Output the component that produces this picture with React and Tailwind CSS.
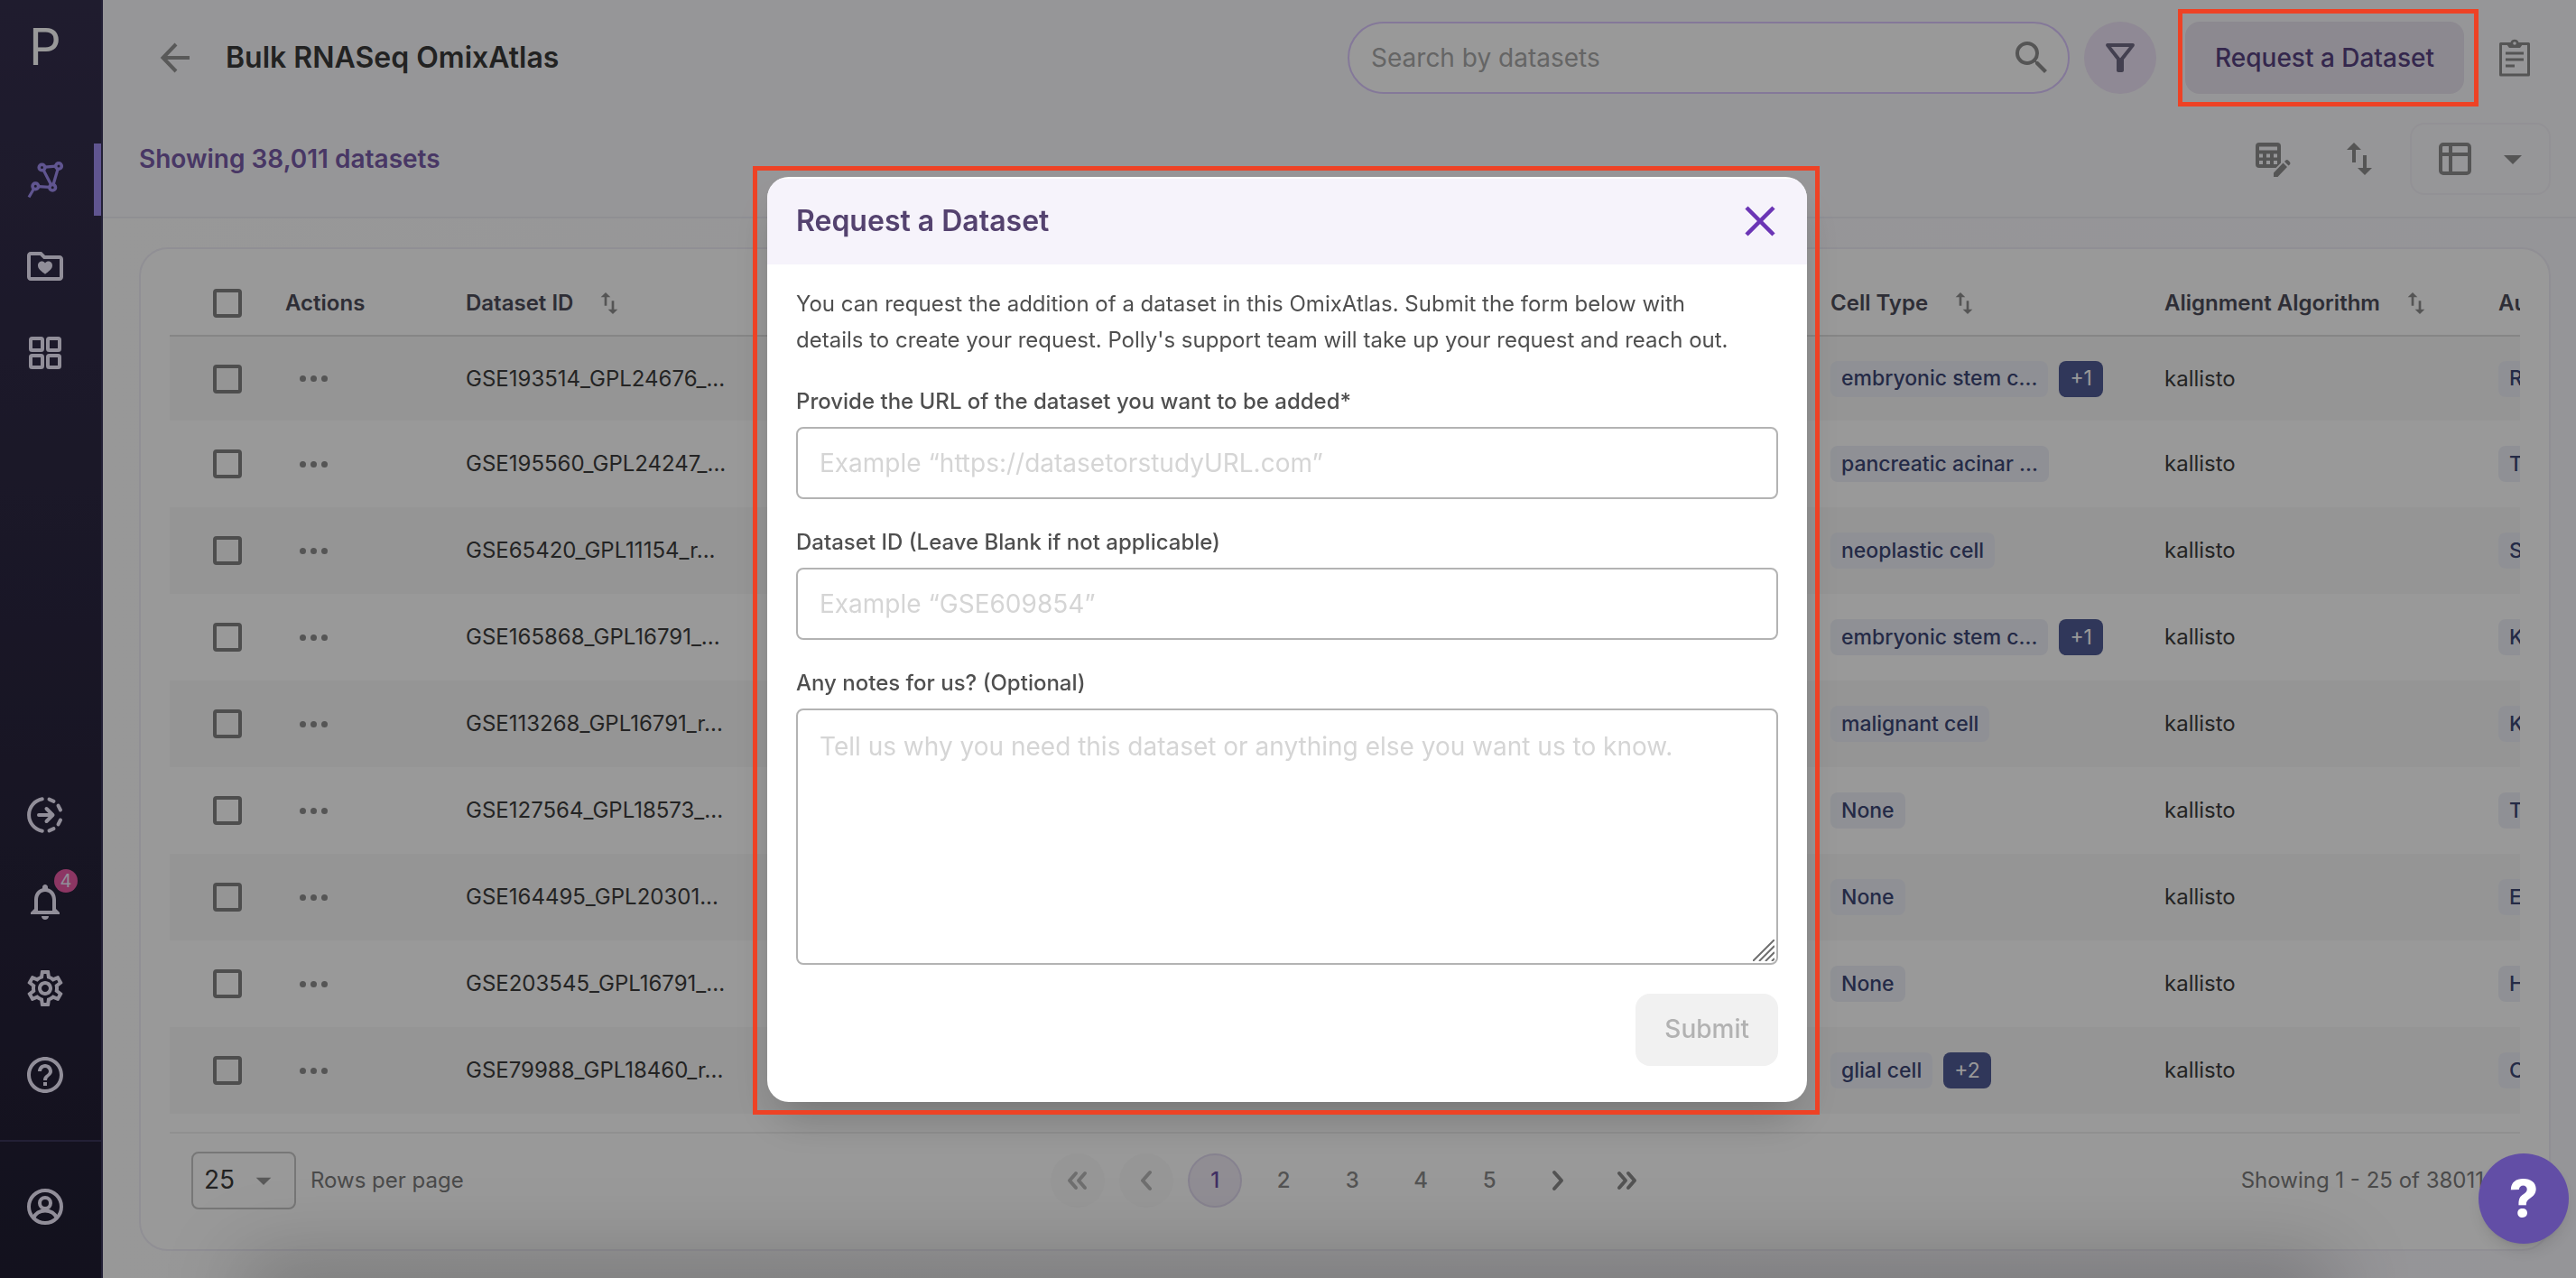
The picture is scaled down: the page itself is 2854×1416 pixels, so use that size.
import React from "react";
import {
  MdSearch,
  MdOutlineFilterAlt,
  MdImportExport,
  MdArrowDropDown,
  MdNotificationsNone,
  MdOutlineSettings,
  MdHelpOutline,
} from "react-icons/md";

const rows = [
  ["GSE193514_GPL24676_...", "embryonic stem c...", "+1", "Ra"],
  ["GSE195560_GPL24247_...", "pancreatic acinar ...", null, "Ta"],
  ["GSE65420_GPL11154_r...", "neoplastic cell", null, "Sa"],
  ["GSE165868_GPL16791_...", "embryonic stem c...", "+1", "Ka"],
  ["GSE113268_GPL16791_r...", "malignant cell", null, "Ka"],
  ["GSE127564_GPL18573_...", "None", null, "Ta"],
  ["GSE164495_GPL20301...", "None", null, "Ea"],
  ["GSE203545_GPL16791_...", "None", null, "Ha"],
  ["GSE79988_GPL18460_r...", "glial cell", "+2", "Ca"],
];

function NetworkIcon() {
  return (
    <svg className="size-12" viewBox="0 0 48 48" fill="none" stroke="currentColor" strokeWidth="3.600">
      <circle cx="20.500" cy="10.500" r="3.300" />
      <circle cx="39" cy="9" r="3.300" />
      <circle cx="13.300" cy="31.300" r="3.300" />
      <circle cx="32.200" cy="32.700" r="3.300" />
      <path d="M24 10.200 35.500 9.200M22.200 13.500 30.500 29.500M38 12.500 33.200 29M17 31.600 28.500 32.400M11.300 34.500 6 43.500" strokeWidth="3.200" />
    </svg>
  );
}

function FolderHeartIcon() {
  return (
    <svg className="size-12" viewBox="0 0 24 24" fill="currentColor">
      <path d="M20 6h-8l-2-2H4c-1.100 0-2 .9-2 2v12c0 1.100.9 2 2 2h16c1.100 0 2-.9 2-2V8c0-1.100-.9-2-2-2zm0 12H4V6h5.170l2 2H20v10z" />
      <path d="M12 16.400l-.6-.5C9.300 14.200 8 13.100 8 11.600 8 10.400 8.900 9.300 10.100 9.300c.7 0 1.400.3 1.900.9.500-.6 1.200-.9 1.900-.9 1.200 0 2.100 1.100 2.100 2.300 0 1.500-1.300 2.600-3.400 4.300z" />
    </svg>
  );
}

function GridIcon() {
  return (
    <svg className="size-12" viewBox="0 0 48 48" fill="none" stroke="currentColor" strokeWidth="4">
      <rect x="8" y="8" width="13" height="13" rx="1.500" />
      <rect x="27" y="8" width="13" height="13" rx="1.500" />
      <rect x="8" y="27" width="13" height="13" rx="1.500" />
      <rect x="27" y="27" width="13" height="13" rx="1.500" />
    </svg>
  );
}

function TransferIcon() {
  return (
    <svg className="size-12" viewBox="0 0 48 48" fill="none" stroke="currentColor" strokeWidth="4" strokeLinecap="round" strokeLinejoin="round">
      <path d="M20.800 6.300A18 18 0 0 0 20.800 41.700" />
      <path d="M28.500 6.600 33.500 8.800M38.500 13.600 41 18.500M41 29.500 38.500 34.400M33.500 39.200 28.500 41.400" />
      <path d="M17 24h15M25.500 17 32.500 24 25.500 31" />
    </svg>
  );
}

function UserIcon() {
  return (
    <svg className="size-12" viewBox="0 0 48 48" fill="none" stroke="currentColor" strokeWidth="4">
      <circle cx="24" cy="24" r="18" />
      <circle cx="24" cy="20" r="6" />
      <path d="M11 36.500C13.500 31 18 28.500 24 28.500S34.500 31 37 36.500" />
    </svg>
  );
}

function BackIcon() {
  return (
    <svg className="size-10" viewBox="0 0 40 40" fill="none" stroke="currentColor" strokeWidth="4">
      <path d="M36 20H7M21 5 6.500 20 21 35" />
    </svg>
  );
}

function ClipboardIcon() {
  return (
    <svg className="size-12" viewBox="0 0 48 48" fill="none" stroke="currentColor" strokeWidth="3">
      <path d="M17 8.500H8.500V43H39.500V8.500H31" strokeLinejoin="round" />
      <path d="M15 9q0-2 2-2h2.500a4.800 4.800 0 0 1 9 0H31q2 0 2 2l-3 4H18z" fill="currentColor" stroke="none" />
      <circle cx="24" cy="8" r="1.800" fill="#fbfafd" stroke="none" />
      <path d="M14 19h20M14 26h20M14 33h10" />
    </svg>
  );
}

function TableEditIcon() {
  return (
    <svg className="size-12" viewBox="0 0 48 48">
      <rect x="5" y="6" width="28" height="28" rx="4" fill="currentColor" />
      <path d="M9 10.500h20v4H9zM9 18.500h4v4H9zM17 18.500h4v4h-4zM25 18.500h4v4h-4zM9 26h4v4H9zM17 26h4v4h-4zM25 26h4v4h-4z" fill="#fbfafd" />
      <path d="M23 46V38.500L39 22.500l8 7L31 46z" fill="#fbfafd" />
      <path d="M25 44V39.500L35.500 28.500l4.500 4.500L29.500 44zM37 27l1.500-1.500q1.500-1 3 .5l1.500 1.500q1 1.500 0 2.800L41.500 31.500z" fill="currentColor" />
    </svg>
  );
}

function TableViewIcon() {
  return (
    <svg className="size-12" viewBox="0 0 48 48" fill="none" stroke="currentColor" strokeWidth="4">
      <rect x="8" y="8" width="32" height="32" rx="3" />
      <path d="M8 19h32M19 8v32" />
    </svg>
  );
}

function Chevrons({ paths }) {
  return (
    <svg className="size-6" viewBox="0 0 24 24" fill="none" stroke="currentColor" strokeWidth="4" strokeLinecap="round" strokeLinejoin="round">
      <path d={paths} />
    </svg>
  );
}

function Checkbox({ label }) {
  return (
    <input
      type="checkbox"
      aria-label={label}
      className="block size-8 appearance-none rounded-sm border-4 border-[#828282]"
    />
  );
}

function SideButton({ label, children }) {
  return (
    <button aria-label={label} className="relative flex h-24 w-full items-center justify-center pr-3 text-[#f2edff]">
      {children}
    </button>
  );
}

function Sidebar() {
  return (
    <nav className="flex w-[114px] shrink-0 flex-col border-r-2 border-[#3b365a] bg-linear-to-b from-[#352f4e] to-[#201d32]">
      <div className="flex h-[151px] items-start pt-4 pl-8 text-[56px] leading-[72px] text-white">P</div>
      <button aria-label="OmixAtlas" className="relative flex h-24 w-full items-center justify-center pr-3 text-[#a08ef0]">
        <NetworkIcon />
        <span className="absolute right-0 top-2 h-20 w-2 bg-[#a08ef0]" />
      </button>
      <SideButton label="Collections"><FolderHeartIcon /></SideButton>
      <SideButton label="Apps"><GridIcon /></SideButton>
      <div className="grow" />
      <SideButton label="Transfers"><TransferIcon /></SideButton>
      <SideButton label="Notifications">
        <MdNotificationsNone className="size-12" />
        <span className="absolute left-[60px] top-3 flex size-[26px] items-center justify-center rounded-full bg-[#e95aa5] text-xl leading-none">4</span>
      </SideButton>
      <SideButton label="Settings"><MdOutlineSettings className="size-12" /></SideButton>
      <SideButton label="Help"><MdHelpOutline className="size-12" /></SideButton>
      <div className="mt-6 border-t-2 border-[#3b365a] pt-6 pb-[31px]">
        <SideButton label="Account"><UserIcon /></SideButton>
      </div>
    </nav>
  );
}

function Header() {
  return (
    <header className="border-b-2 border-[#efeef6] pl-10 pr-7">
      <div className="flex h-32 items-center">
        <button aria-label="Back" className="ml-5 text-[#949494]"><BackIcon /></button>
        <h1 className="ml-9 text-[32px] font-semibold text-[#3a3a3a]">Bulk RNASeq OmixAtlas</h1>
        <label className="ml-auto flex h-20 w-[800px] items-center rounded-full border-2 border-[#dcc9ff] bg-white pl-6 pr-4">
          <input
            aria-label="Search by datasets"
            placeholder="Search by datasets"
            className="min-w-0 grow text-[28px] outline-none placeholder:text-[#a9a9a9]"
          />
          <MdSearch className="size-12 text-[#8e8e8e]" />
        </label>
        <button aria-label="Filter" className="ml-4 flex size-20 items-center justify-center rounded-full bg-[#eee4f8] text-[#716b85]">
          <MdOutlineFilterAlt className="size-12" />
        </button>
        <div className="relative ml-8">
          <button className="h-20 rounded-2xl bg-[#e9e4f0] px-[33px] text-[28px] font-medium text-[#574280]">Request a Dataset</button>
          <span className="pointer-events-none absolute -bottom-3.5 -left-2 -right-4 -top-3.5 z-30 border-[5px] border-[#ee4225]" />
        </div>
        <button aria-label="Clipboard" className="ml-8 mr-4 text-[#8e8e8e]"><ClipboardIcon /></button>
      </div>
      <div className="flex h-28 items-center pb-4 text-[#8e8e8e]">
        <p className="grow text-[28px] font-semibold text-[#785ca8]">Showing 38,011 datasets</p>
        <button aria-label="Edit table"><TableEditIcon /></button>
        <button aria-label="Sort" className="ml-12"><MdImportExport className="size-12" /></button>
        <button aria-label="Table view" className="ml-8 flex h-20 w-[156px] items-center justify-between rounded-2xl border-2 border-[#f4f2f8] pl-6 pr-4">
          <TableViewIcon />
          <MdArrowDropDown className="size-12" />
        </button>
      </div>
    </header>
  );
}

const chip = "inline-flex h-10 items-center rounded-lg bg-[#eff1f9] px-3 text-[23px] font-medium text-[#3c4676]";

function DatasetTable() {
  return (
    <table className="w-full table-fixed border-collapse text-left text-2xl text-[#3c3c3c]">
      <colgroup>
        <col className="w-32" />
        <col className="w-[200px]" />
        <col className="w-[370px]" />
        <col />
        <col className="w-[370px]" />
        <col className="w-[370px]" />
        <col className="w-6" />
      </colgroup>
      <thead>
        <tr className="h-[72px] border-b-2 border-[#e0e0e0] text-[#4d4d5a]">
          <th className="pl-12"><Checkbox label="Select all" /></th>
          <th className="font-semibold">Actions</th>
          <th className="font-semibold"><span className="flex items-center gap-6">Dataset ID <MdImportExport className="size-8 text-[#8e8e8e]" /></span></th>
          <th />
          <th className="font-semibold"><span className="flex items-center gap-6">Cell Type <MdImportExport className="size-8 text-[#8e8e8e]" /></span></th>
          <th className="font-semibold"><span className="flex items-center gap-6">Alignment Algorithm <MdImportExport className="size-8 text-[#8e8e8e]" /></span></th>
          <th className="overflow-hidden whitespace-nowrap font-semibold">Author</th>
        </tr>
      </thead>
      <tbody>
        {rows.map(([id, cell, more, author]) => (
          <tr key={id} className="h-24 odd:bg-[#f9f9f9] first:h-[94px]">
            <td className="pl-12"><Checkbox label={"Select " + id} /></td>
            <td className="pl-4">
              <button aria-label={"Actions for " + id} className="flex gap-[5px] text-[#8e8e8e]">
                <span className="size-[7px] rounded-full bg-current" />
                <span className="size-[7px] rounded-full bg-current" />
                <span className="size-[7px] rounded-full bg-current" />
              </button>
            </td>
            <td>{id}</td>
            <td />
            <td>
              <span className="flex gap-3">
                <span className={chip}>{cell}</span>
                {more && <span className="inline-flex h-10 items-center rounded-lg bg-[#515c96] px-3 text-[23px] text-white">{more}</span>}
              </span>
            </td>
            <td>kallisto</td>
            <td className="overflow-hidden"><span className={chip}>{author}</span></td>
          </tr>
        ))}
      </tbody>
    </table>
  );
}

function Pagination() {
  const round = "flex size-[60px] items-center justify-center rounded-full text-2xl font-medium text-[#8a8a8a]";
  return (
    <div className="mt-5 flex h-[106px] items-center justify-between border-t-2 border-[#f0f0f0] pl-6 pr-10 text-2xl text-[#7c7c7c]">
      <label className="flex items-center gap-4">
        <span className="relative flex items-center">
          <select className="h-16 w-[116px] appearance-none rounded-lg border-2 border-[#c6c6c6] pl-3 text-[28px] text-[#3a3a3a]">
            <option>25</option>
          </select>
          <MdArrowDropDown className="pointer-events-none absolute right-4 size-10 text-[#949494]" />
        </span>
        Rows per page
      </label>
      <div className="flex gap-4">
        <button aria-label="First page" className={round + " bg-[#fafafa] opacity-60"}><Chevrons paths="M10 4 3 12 10 20M20 4 13 12 20 20" /></button>
        <button aria-label="Previous page" className={round + " bg-[#fafafa] opacity-60"}><Chevrons paths="M16 3 8 12 16 21" /></button>
        <button className="flex size-[60px] items-center justify-center rounded-full border-2 border-[#e0d9ee] bg-[#f0ebf6] text-2xl font-medium text-[#6c4fa6]">1</button>
        <button className={round}>2</button>
        <button className={round}>3</button>
        <button className={round}>4</button>
        <button className={round}>5</button>
        <button aria-label="Next page" className={round}><Chevrons paths="M8 3 16 12 8 21" /></button>
        <button aria-label="Last page" className={round}><Chevrons paths="M4 4 11 12 4 20M14 4 21 12 14 20" /></button>
      </div>
      <p>Showing 1 - 25 of 38011</p>
    </div>
  );
}

const field = "block w-full rounded-lg border-2 border-[#b3b3b3] bg-white px-6 text-[28px] outline-none placeholder:text-[#d5d5d5]";

function RequestDialog() {
  return (
    <div className="fixed inset-0 z-20 flex items-center justify-center bg-black/40 pr-0.5">
      <div className="relative w-[1152px] max-w-full">
        <section role="dialog" aria-labelledby="dialog-title" className="overflow-hidden rounded-3xl bg-white pt-0.5 text-2xl text-[#4f4f4f] shadow-2xl">
          <div className="flex h-[95px] items-center justify-between bg-[#f6f3fb] px-8">
            <h2 id="dialog-title" className="text-[32px] font-semibold text-[#54426f]">Request a Dataset</h2>
            <button aria-label="Close" className="text-[#6b35b5]">
              <svg className="size-10" viewBox="0 0 40 40" fill="none" stroke="currentColor" strokeWidth="4.500">
                <path d="M5 5 35 35M35 5 5 35" />
              </svg>
            </button>
          </div>
          <form className="px-8 pb-10 pt-6">
            <p className="leading-10">
              You can request the addition of a dataset in this OmixAtlas. Submit the form below with
              <br />
              details to create your request. Polly's support team will take up your request and reach out.
            </p>
            <label htmlFor="url" className="mt-8 block font-medium leading-8">Provide the URL of the dataset you want to be added*</label>
            <input id="url" placeholder="Example “https://datasetorstudyURL.com”" className={field + " mt-3 h-20"} />
            <label htmlFor="dataset-id" className="mt-8 block font-medium leading-8">Dataset ID (Leave Blank if not applicable)</label>
            <input id="dataset-id" placeholder="Example “GSE609854”" className={field + " mt-3 h-20"} />
            <label htmlFor="notes" className="mt-8 block font-medium leading-8">Any notes for us? (Optional)</label>
            <div className="relative mt-3">
              <textarea id="notes" placeholder="Tell us why you need this dataset or anything else you want us to know." className={field + " h-[284px] resize-none pt-5 leading-10"} />
              <svg className="absolute bottom-1 right-1 size-6" viewBox="0 0 24 24" fill="none" stroke="#6f6f6f" strokeWidth="2">
                <path d="M0 24 24 0M7 24 24 7M14 24 24 14M21 24 24 21" />
              </svg>
            </div>
            <div className="mt-8 flex justify-end">
              <button type="button" disabled className="h-20 rounded-2xl bg-[#f1f1f1] px-8 text-[28px] font-medium text-[#b2b2b2]">Submit</button>
            </div>
          </form>
        </section>
        <span className="pointer-events-none absolute -bottom-3.5 -left-4 -right-3.5 -top-3 border-[5px] border-[#ee4225]" />
      </div>
    </div>
  );
}

export default function App() {
  return (
    <div className="flex min-h-screen overflow-hidden bg-[#fbfafd] font-['Inter',sans-serif]">
      <Sidebar />
      <div className="flex min-w-0 grow flex-col">
        <Header />
        <main className="grow bg-linear-to-r from-[#fdfdfd] to-[#f9f8fd] px-7 pb-7 pl-10 pt-8">
          <div className="rounded-[32px] border-2 border-[#f0eef7] bg-white px-8 pb-6 pt-6">
            <DatasetTable />
            <Pagination />
          </div>
        </main>
      </div>
      <div className="fixed -bottom-10 left-72 right-72 h-10 shadow-[0_0_90px_20px_rgba(0,0,0,0.22)]" />
      <RequestDialog />
      <button aria-label="Open help" className="fixed bottom-[38px] right-2 z-40 flex size-[100px] items-center justify-center rounded-full bg-[#624ea6] text-[56px] font-extrabold text-white shadow-lg">?</button>
    </div>
  );
}
